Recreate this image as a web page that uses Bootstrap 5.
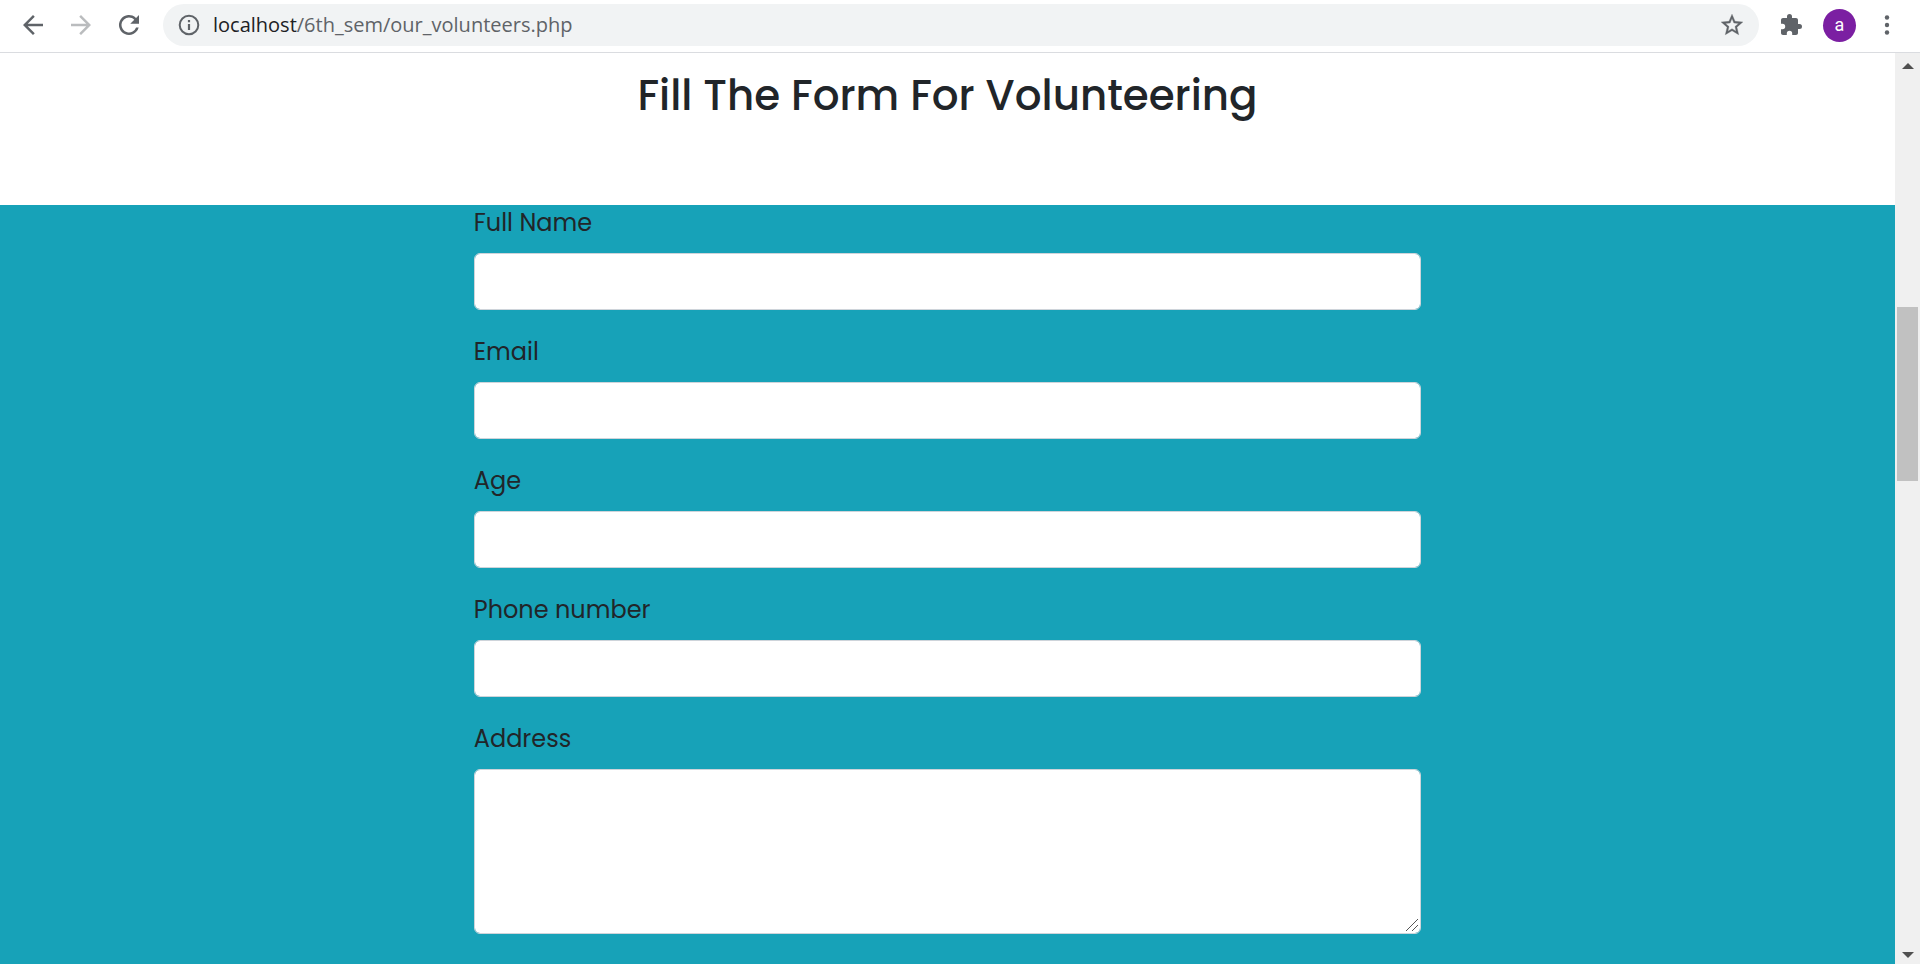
<!DOCTYPE html>
<html lang="en">
<head>
<meta charset="utf-8">
<meta name="viewport" content="width=device-width, initial-scale=1">
<title>Our Volunteers</title>
<link href="https://cdn.jsdelivr.net/npm/bootstrap@5.3.0/dist/css/bootstrap.min.css" rel="stylesheet">
<style>
  body { font-family: Poppins, Inter, sans-serif; font-size: 24px; font-weight: 400; line-height: 36px; color: #212529; }
  .toolbar { height: 53px; padding: 4px 16px 6px 17px; border-bottom: 1px solid #dadce0; gap: 16px; }
  .tool-btn { width: 32px; height: 32px; color: #5f6368; }
  .tool-btn:disabled { color: #babcbe; border-color: transparent; }
  .address-bar { height: 42px; margin-left: 2px; padding: 0 14px 0 12px; background: #f1f3f4; gap: 6px; }
  .address-text { font: 400 20px/28px "Segoe UI", "Open Sans", sans-serif; color: #5f6368; }
  .address-text b { font-weight: 400; color: #202124; }
  .avatar { width: 33px; height: 33px; background: #7b1fa2; color: #fff; font: 400 18px/32px Roboto, sans-serif; }
  .page-title { font-size: 42px; font-weight: 500; line-height: 50px; padding: 18px 0 84px; }
  .form-area { background: #17a2b8; }
  .form-label { margin-bottom: 12px; }
  .form-control { font-size: 24px; line-height: 36px; height: 57px; border-color: #ced4da; border-radius: 6px; }
  textarea.form-control { height: 165px; }
  textarea::-webkit-resizer { background: url("data:image/svg+xml,%3Csvg xmlns='http://www.w3.org/2000/svg' width='15' height='15'%3E%3Cpath d='M1 13L13 1M7 13l6-6' stroke='%23555'/%3E%3C/svg%3E") no-repeat; }
  .field { margin-bottom: 24px; }
  .scroll-track { width: 25px; background: #f0f0f0; }
  .scroll-arrow { height: 25px; color: #505050; }
  .scroll-arrow.arrow-down { height: 18px; }
  .scroll-thumb { flex: 174; width: 21px; background: #c1c1c1; }
  .space-above { flex: 229; }
  .space-below { flex: 465; }
</style>
</head>
<body class="vh-100 d-flex flex-column overflow-hidden bg-white">
<header class="toolbar d-flex align-items-center flex-shrink-0">
  <button class="tool-btn btn p-0 border-0 d-flex align-items-center justify-content-center" aria-label="Back">
    <svg width="30" height="30" viewBox="0 0 24 24" fill="currentColor"><path d="M20 11H7.8l5.6-5.6L12 4l-8 8 8 8 1.4-1.4L7.800 13H20z"/></svg></button>
  <button class="tool-btn btn p-0 border-0 d-flex align-items-center justify-content-center opacity-100" aria-label="Forward" disabled>
    <svg width="30" height="30" viewBox="0 0 24 24" fill="currentColor"><path d="M4 11h12.200l-5.600-5.600L12 4l8 8-8 8-1.400-1.400 5.600-5.600H4z"/></svg></button>
  <button class="tool-btn btn p-0 border-0 d-flex align-items-center justify-content-center" aria-label="Reload">
    <svg width="30" height="30" viewBox="0 0 24 24" fill="currentColor"><path d="M17.650 6.350A8 8 0 1 0 19.730 14h-2.080A6 6 0 1 1 12 6c1.660 0 3.140.690 4.220 1.780L13 11h7V4z"/></svg></button>
  <div class="address-bar rounded-pill d-flex align-items-center flex-grow-1">
    <svg width="28" height="28" viewBox="0 0 28 28" fill="none" stroke="#5f6368" stroke-width="2"><circle cx="14" cy="14" r="9.300"/><path d="M14 13v6M14 9v2.200" stroke-width="2.200"/></svg>
    <span class="address-text ps-1 flex-grow-1"><b>localhost</b>/6th_sem/our_volunteers.php</span>
    <button class="btn p-0 border-0 d-flex" aria-label="Bookmark this page">
      <svg width="26" height="26" viewBox="0 0 24 24" fill="#5f6368"><path d="M22 9.240l-7.190-.620L12 2 9.190 8.630 2 9.240l5.460 4.730L5.820 21 12 17.270 18.180 21l-1.630-7.030L22 9.240zM12 15.400l-3.760 2.270 1-4.280-3.320-2.880 4.380-.380L12 6.100l1.710 4.040 4.380.380-3.320 2.880 1 4.280L12 15.400z" stroke="#5f6368" stroke-width=".3"/></svg></button>
  </div>
  <button class="tool-btn btn p-0 border-0 d-flex align-items-center justify-content-center" aria-label="Extensions">
    <svg width="24" height="24" viewBox="0 0 24 24" fill="currentColor"><path d="M20.500 11H19V7c0-1.100-.900-2-2-2h-4V3.500a2.500 2.500 0 0 0-5 0V5H4c-1.100 0-1.990.900-1.990 2v3.800H3.500a2.700 2.700 0 0 1 0 5.400H2V20c0 1.100.900 2 2 2h3.800v-1.500a2.700 2.700 0 0 1 5.400 0V22H17c1.100 0 2-.900 2-2v-4h1.500a2.500 2.500 0 0 0 0-5z"/></svg></button>
  <button class="avatar btn p-0 border-0 rounded-circle" aria-label="Profile">a</button>
  <button class="tool-btn btn p-0 border-0 d-flex align-items-center justify-content-center" aria-label="Menu">
    <svg width="30" height="30" viewBox="0 0 30 30" fill="currentColor"><circle cx="14" cy="7.500" r="2.200"/><circle cx="14" cy="15" r="2.200"/><circle cx="14" cy="22.500" r="2.200"/></svg></button>
</header>
<div class="d-flex flex-grow-1 overflow-hidden">
  <main class="flex-grow-1 d-flex flex-column">
    <h1 class="page-title text-center m-0">Fill The Form For Volunteering</h1>
    <section class="form-area flex-grow-1">
      <form class="w-50 mx-auto">
        <div class="field"><label class="form-label d-block" for="name">Full Name</label><input class="form-control" type="text" id="name"></div>
        <div class="field"><label class="form-label d-block" for="email">Email</label><input class="form-control" type="text" id="email"></div>
        <div class="field"><label class="form-label d-block" for="age">Age</label><input class="form-control" type="text" id="age"></div>
        <div class="field"><label class="form-label d-block" for="phone">Phone number</label><input class="form-control" type="text" id="phone"></div>
        <div class="field"><label class="form-label d-block" for="address">Address</label><textarea class="form-control" id="address"></textarea></div>
      </form>
    </section>
  </main>
  <div class="scroll-track d-flex flex-column align-items-center flex-shrink-0" aria-hidden="true">
    <div class="scroll-arrow d-flex align-items-center"><svg width="12" height="6" viewBox="0 0 12 6" fill="currentColor"><path d="M0 6l6-6 6 6z"/></svg></div>
    <div class="space-above"></div>
    <div class="scroll-thumb"></div>
    <div class="space-below"></div>
    <div class="scroll-arrow arrow-down d-flex align-items-center"><svg width="12" height="6" viewBox="0 0 12 6" fill="currentColor"><path d="M0 0l6 6 6-6z"/></svg></div>
  </div>
</div>
<script src="https://cdn.jsdelivr.net/npm/bootstrap@5.3.0/dist/js/bootstrap.bundle.min.js"></script>
</body>
</html>
